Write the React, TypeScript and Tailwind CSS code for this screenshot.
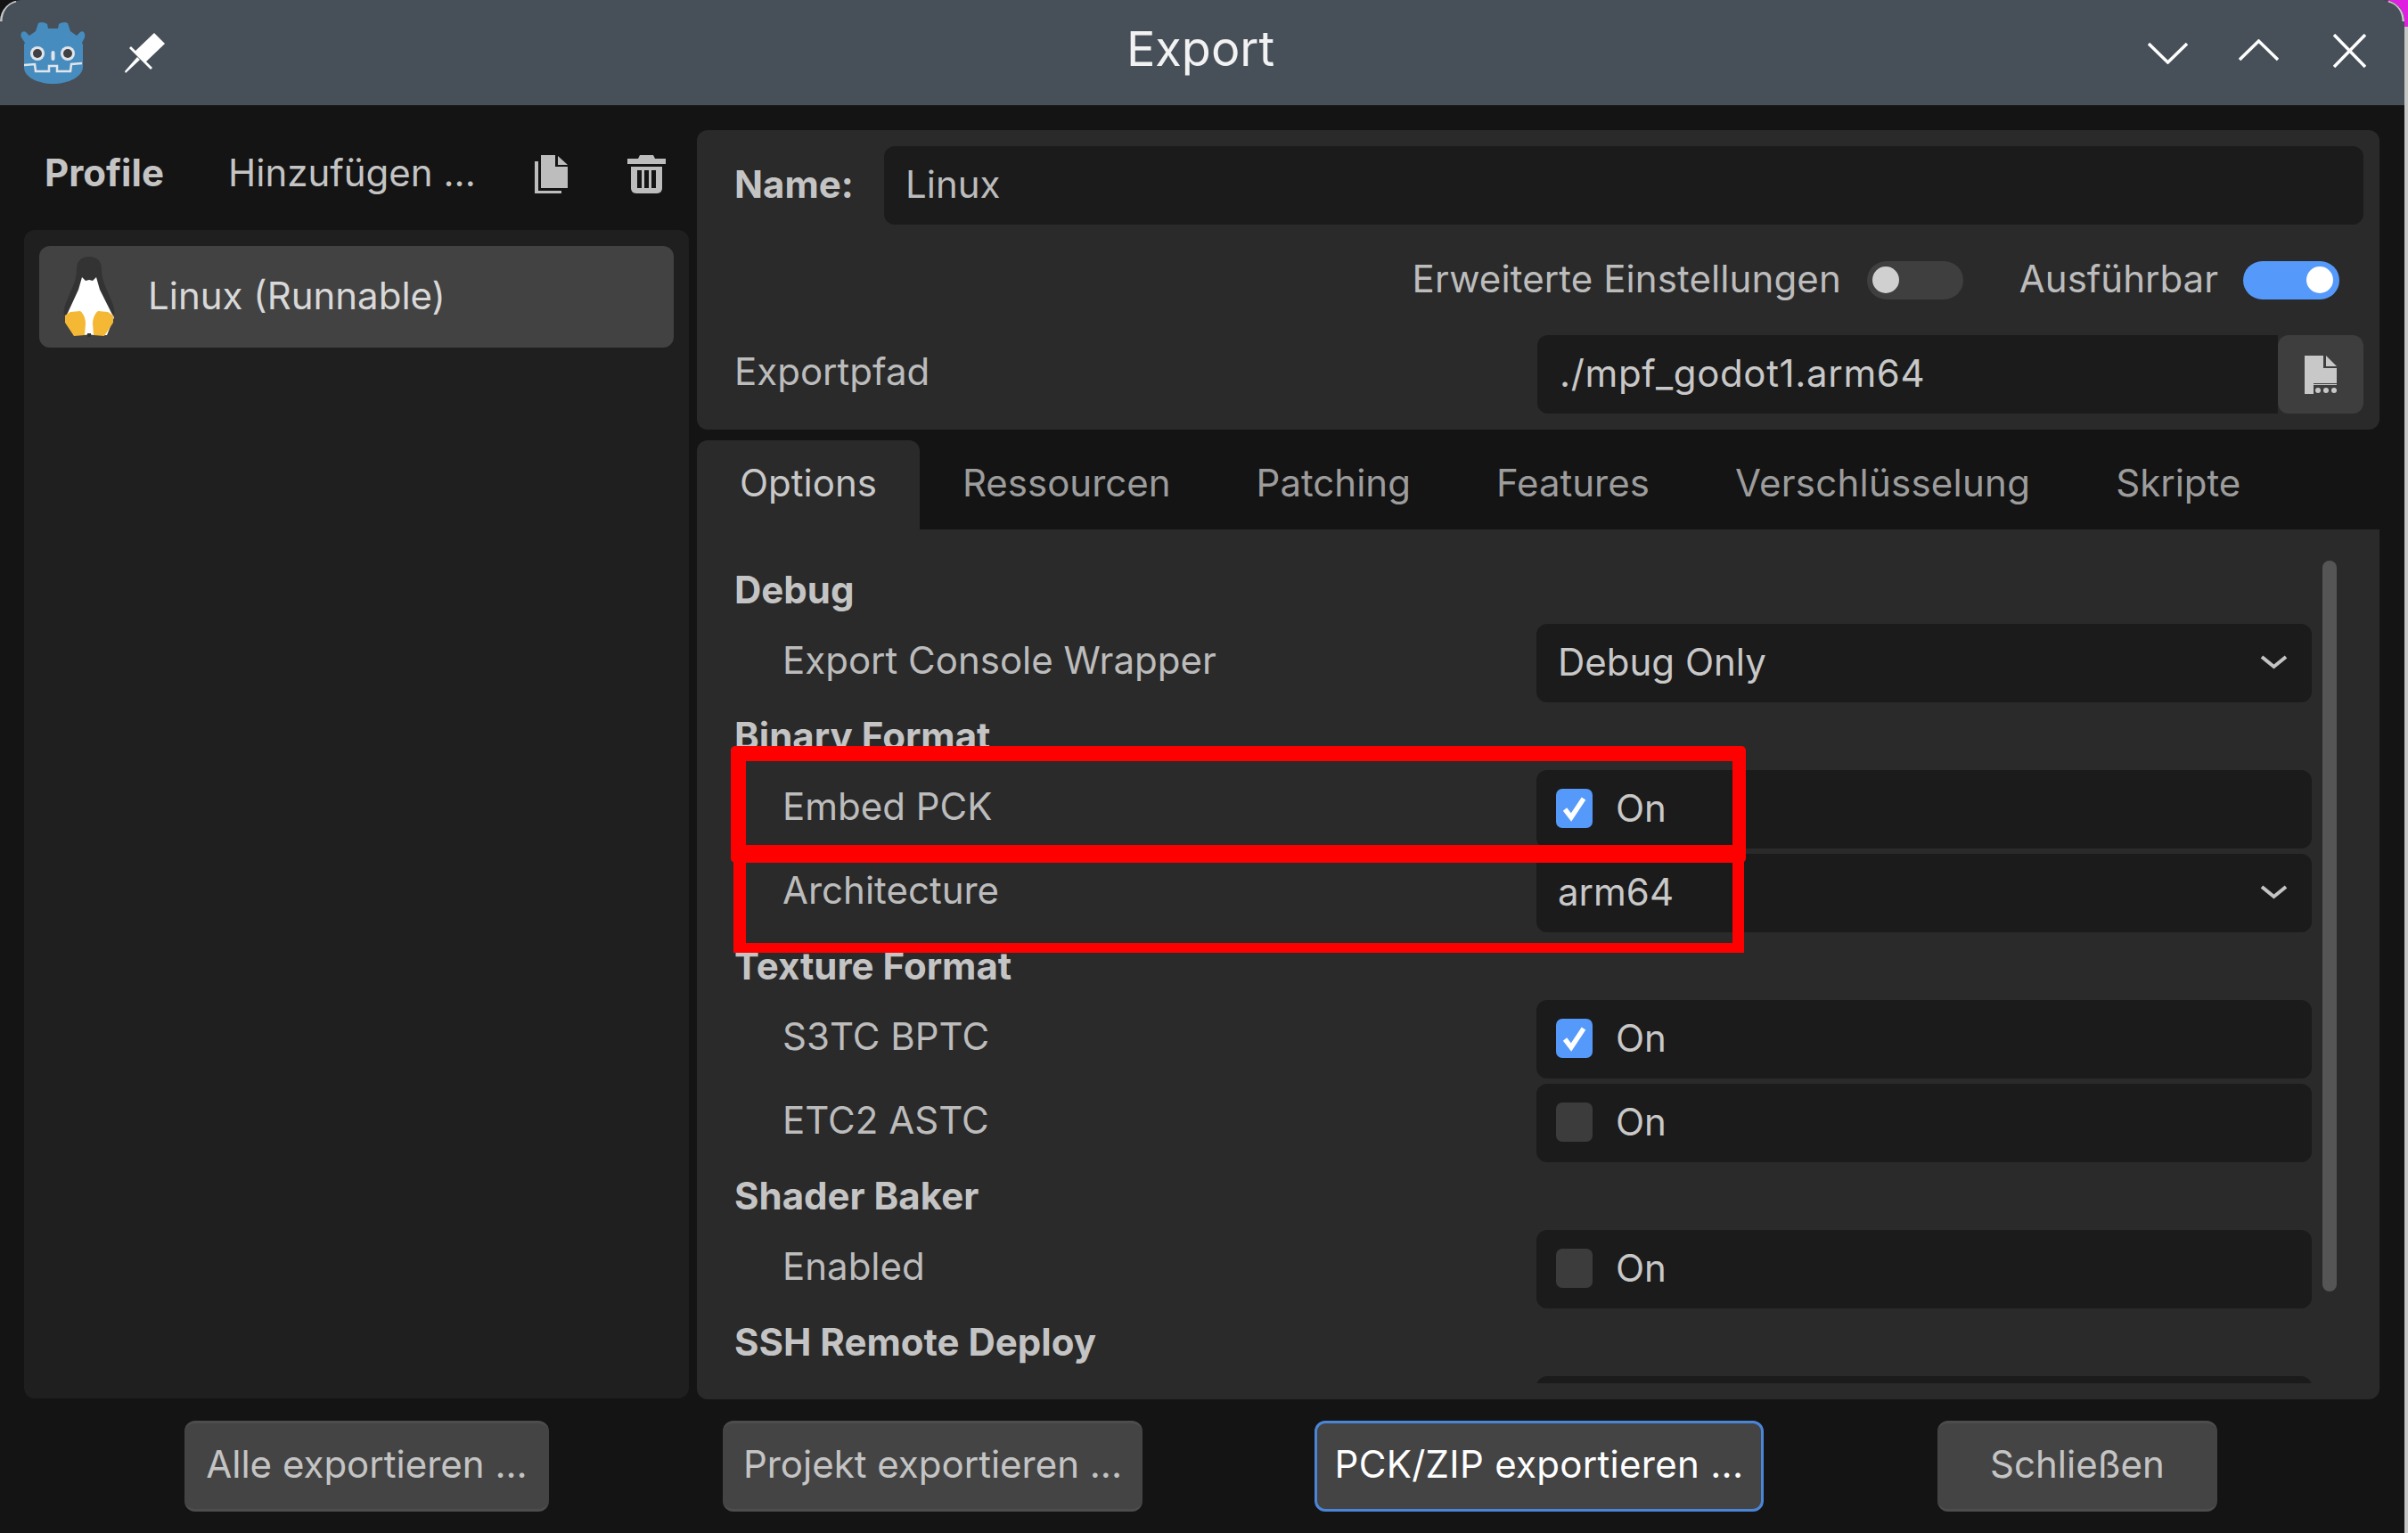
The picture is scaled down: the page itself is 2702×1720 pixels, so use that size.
import React from "react";

const FONT = "font-['Inter','Liberation_Sans',sans-serif]";

function GodotIcon() {
  return (
    <svg viewBox="0 0 73 70" className="w-[73px] h-[70px] shrink-0">
      <path
        d="M20 2c3-2 7-1 10 1l1 5h11l1-5c3-2 7-3 10-1l3 9 7 5 4-4c3-2 6 0 5 6l-3 6 1 2v25c0 11-16 19-33.500 19S4 62 4 52V26l1-2-4-6c-2-5 2-8 5-6l4 4 7-5z"
        fill="#478cbf"
      />
      <circle cx="19" cy="36" r="8" fill="#dfe5ea" />
      <circle cx="53" cy="36" r="8" fill="#dfe5ea" />
      <circle cx="19" cy="36" r="5" fill="#414042" />
      <circle cx="53" cy="36" r="5" fill="#414042" />
      <rect x="34.500" y="33" width="4" height="11" rx="2" fill="#dfe5ea" />
      <path d="M4 49l12-1 1 8h15v-6h9v6h15l1-8 12-1" fill="none" stroke="#dfe5ea" strokeWidth="2.500" />
    </svg>
  );
}

function PinIcon() {
  return (
    <svg viewBox="0 0 45 45" className="w-[45px] h-[45px] shrink-0" fill="#ffffff">
      <path d="M33 0l12 12-22 21-12-12z" />
      <path d="M5 17l2-2 24 24-2 2z" />
      <path d="M1 45l-1-2 14-16 3 3z" />
    </svg>
  );
}

function DuplicateIcon() {
  return (
    <svg viewBox="0 0 37 43" className="w-[37px] h-[43px] shrink-0" fill="#bdbdbd">
      <path d="M7 0h16v13h14v24H7z" />
      <path d="M26 1l11 10H26z" />
      <path d="M0 7h4v33h26v3H0z" />
    </svg>
  );
}

function TrashIcon() {
  return (
    <svg viewBox="0 0 43 43" className="w-[43px] h-[43px] shrink-0" fill="#bdbdbd">
      <path d="M14 0h15l2 4h12v6H0V4h12z" />
      <path fillRule="evenodd" d="M4 13h35v24c0 3-2 6-6 6H10c-4 0-6-3-6-6zM11 17v20h5V17zM19 17v20h5V17zM27 17v20h5V17z" />
    </svg>
  );
}

function TuxIcon() {
  return (
    <svg viewBox="0 0 58 92" className="w-[58px] h-[92px] shrink-0">
      <path d="M29 1c9 0 14 5 14 14 0 13 5 20 10 33 4 9 5 14 4 18H1c-1-4 0-9 4-18 5-13 10-20 10-33C15 6 20 1 29 1z" fill="#333333" />
      <path d="M21 24l4 4 4-1 4 1 4-4 4 14 13 26 3 5-8 20H34l-5-1-5 1H12L2 69l3-5 12-26z" fill="#ffffff" />
      <path d="M2 67l6-4 11-1c4 3 6 9 6 14l-1 13-12 1-10-15z" fill="#f4b835" />
      <path d="M56 67l-6-4-11-1c-4 3-6 9-6 14l1 13 12 1 10-15z" fill="#f4b835" />
      <rect x="27" y="87" width="4" height="4" fill="#333333" />
    </svg>
  );
}

function SaveFileIcon() {
  return (
    <svg viewBox="0 0 36 44" className="w-[36px] h-[44px]" fill="#c8c8c8">
      <path d="M0 1h21v14h15v17H10v12H0z" />
      <path d="M24 1l12 12H24z" />
      <circle cx="15" cy="40" r="3" />
      <circle cx="24" cy="40" r="3" />
      <circle cx="33" cy="40" r="3" />
      <rect x="10" y="33" width="26" height="1" />
    </svg>
  );
}

function Chevron() {
  return (
    <svg viewBox="0 0 31 17" className="w-[31px] h-[17px]" fill="none" stroke="#c4c4c4" strokeWidth="4">
      <path d="M2 3l13.500 11L29 3" />
    </svg>
  );
}

function Toggle({ on }: { on: boolean }) {
  return (
    <div
      className={
        on
          ? "w-[108px] h-[43px] rounded-full bg-[#5599fa] flex items-center justify-end pr-[7px]"
          : "w-[108px] h-[43px] rounded-full bg-[#3f3f3f] flex items-center justify-start pl-[6px]"
      }
    >
      <div className={on ? "w-[30px] h-[30px] rounded-full bg-white" : "w-[30px] h-[30px] rounded-full bg-[#d0d0d0]"} />
    </div>
  );
}

function Check({ on }: { on: boolean }) {
  return (
    <div className={on ? "w-[41px] h-[44px] rounded-[7px] bg-[#5599fa] flex items-center justify-center" : "w-[41px] h-[44px] rounded-[7px] bg-[#3c3c3c]"}>
      {on && (
        <svg viewBox="0 0 32 32" className="w-[32px] h-[32px]" fill="none" stroke="#ffffff" strokeWidth="5.500">
          <path d="M5 17l7 9L26 5" />
        </svg>
      )}
    </div>
  );
}

function SectionLabel({ children }: { children: React.ReactNode }) {
  return <div className="h-[64px] flex items-center pl-[42px] font-bold text-[42px] leading-none text-[#c4c4c4]">{children}</div>;
}

function Row({ label, children }: { label: string; children: React.ReactNode }) {
  return (
    <div className="flex h-[88px] my-[6px] items-stretch">
      <div className="w-[942px] pl-[96px] pr-[8px] flex items-center text-[42px] leading-none text-[#bcbcbc] pb-[7px]">{label}</div>
      <div className="w-[870px] rounded-[12px] bg-[#1b1b1b] flex items-center pb-[3px]">{children}</div>
    </div>
  );
}

function CheckValue({ on }: { on: boolean }) {
  return (
    <div className="flex items-center pl-[22px] gap-[26px] text-[42px] leading-none text-[#c8c8c8]">
      <Check on={on} />
      <span>On</span>
    </div>
  );
}

function SelectValue({ value }: { value: string }) {
  return (
    <div className="flex items-center justify-between w-full pl-[24px] pr-[27px] text-[42px] leading-none text-[#c8c8c8]">
      <span>{value}</span>
      <Chevron />
    </div>
  );
}

function Tab({ label, active, wide }: { label: string; active?: boolean; wide?: boolean }) {
  return (
    <div
      className={
        (active
          ? "h-[100px] px-[48px] pb-[4px] flex items-center rounded-t-[12px] bg-[#2a2a2a] text-[42px] leading-none text-[#c8c8c8]"
          : "h-[100px] px-[48px] pb-[4px] flex items-center text-[42px] leading-none text-[#9c9c9c]") +
        (wide ? " tracking-[0.25px]" : "")
      }
    >
      {label}
    </div>
  );
}

function FooterButton({ label, width, focus }: { label: string; width: string; focus?: boolean }) {
  return (
    <div
      className={
        (focus
          ? "border-[3px] border-[#4a86d8] text-[#ffffff] tracking-[0.3px] "
          : "border-y-[3px] border-x-0 border-y-[#4d4d4d] text-[#c4c4c4] ") +
        width +
        " h-[102px] pb-[4px] rounded-[12px] bg-[#444444] flex items-center justify-center text-[42px] leading-none"
      }
    >
      {label}
    </div>
  );
}

export default function App() {
  return (
    <div className={FONT + " relative w-[2702px] h-[1720px] bg-[#c6c6c6] overflow-hidden"}>
      <div className="absolute right-0 top-0 w-[30px] h-[30px] bg-[#e020e0]" />
      <div className="absolute left-0 top-0 w-[30px] h-[30px] bg-[#141414]" />
      <div className="relative w-[2698px] h-[1720px] bg-[#141414] rounded-t-[24px] overflow-hidden flex flex-col">
        {/* title bar */}
        <div className="relative h-[118px] bg-[#475059] flex items-center shrink-0 pl-[23px]">
          <GodotIcon />
          <div className="ml-[44px]"><PinIcon /></div>
          <div className="absolute inset-x-0 top-0 h-[110px] flex items-center justify-center text-[54px] leading-none text-[#f2f2f2] pr-[4px]">Export</div>
          <div className="ml-auto flex items-center pr-[43px]">
            <svg viewBox="0 0 45 25" className="w-[45px] h-[25px] mr-[57px]" fill="none" stroke="#ffffff" strokeWidth="3.500">
              <path d="M1 2l21.500 21L44 2" />
            </svg>
            <svg viewBox="0 0 45 25" className="w-[45px] h-[25px] mr-[61px] -mt-[6px]" fill="none" stroke="#ffffff" strokeWidth="3.500">
              <path d="M1 23L22.500 2 44 23" />
            </svg>
            <svg viewBox="0 0 37 38" className="w-[37px] h-[38px] -mt-[4px]" fill="none" stroke="#ffffff" strokeWidth="3.500">
              <path d="M1 1l35 36M36 1L1 37" />
            </svg>
          </div>
          {/* light rim at the rounded window corners */}
          <svg viewBox="0 0 30 30" className="absolute left-0 top-0 w-[30px] h-[30px]" fill="none" stroke="#c6c6c6" strokeWidth="3">
            <path d="M1 24C1 12 8 3 18 1" />
          </svg>
          <svg viewBox="0 0 30 30" className="absolute right-0 top-0 w-[30px] h-[30px]" fill="none" stroke="#c6c6c6" strokeWidth="3">
            <path d="M29 24C29 12 22 3 12 1" />
          </svg>
        </div>

        {/* body */}
        <div className="flex flex-1 min-h-0">
          {/* sidebar */}
          <div className="w-[782px] shrink-0 flex flex-col pl-[27px] pr-[9px]">
            <div className="h-[140px] flex items-center pt-[12px] pl-[23px] text-[42px] leading-none text-[#c4c4c4]">
              <span className="font-bold w-[206px]">Profile</span>
              <span className="w-[344px]">Hinzufügen ...</span>
              <div className="mt-[2px]"><DuplicateIcon /></div>
              <div className="ml-[67px] mt-[2px]"><TrashIcon /></div>
            </div>
            <div className="h-[1311px] rounded-[12px] bg-[#1f1f1f] pt-[18px] px-[17px]">
              <div className="h-[114px] rounded-[12px] bg-[#424242] flex items-center pl-[27px] text-[42px] leading-none text-[#d8d8d8]">
                <TuxIcon />
                <span className="ml-[37px] -mt-[2px]">Linux (Runnable)</span>
              </div>
            </div>
          </div>

          {/* right column */}
          <div className="w-[1888px] shrink-0 flex flex-col pt-[28px]">
            {/* header card */}
            <div className="h-[336px] rounded-[12px] bg-[#2a2a2a] pt-[18px] px-[18px] text-[42px] leading-none flex flex-col shrink-0">
              <div className="flex h-[88px] items-center">
                <span className="w-[192px] pl-[24px] font-bold text-[#c4c4c4] pb-[2px]">Name:</span>
                <div className="flex-1 h-[88px] rounded-[12px] bg-[#1b1b1b] flex items-center pl-[24px] pb-[2px] text-[#bcbcbc]">Linux</div>
              </div>
              <div className="flex h-[124px] items-center justify-end pr-[27px] text-[#bcbcbc]">
                <span className="pb-[2px] tracking-[0.1px]">Erweiterte Einstellungen</span>
                <div className="ml-[29px]"><Toggle on={false} /></div>
                <span className="ml-[63px] pb-[2px]">Ausführbar</span>
                <div className="ml-[28px]"><Toggle on /></div>
              </div>
              <div className="flex h-[88px] items-center">
                <span className="w-[925px] pl-[24px] pb-[6px] text-[#bcbcbc]">Exportpfad</span>
                <div className="flex-1 h-[88px] rounded-l-[12px] bg-[#1b1b1b] flex items-center pl-[25px] pb-[3px] text-[#c8c8c8] tracking-[0.65px]">./mpf_godot1.arm64</div>
                <div className="w-[96px] h-[88px] rounded-[12px] bg-[#3e3e3e] flex items-center justify-center">
                  <SaveFileIcon />
                </div>
              </div>
            </div>

            {/* tabs */}
            <div className="flex mt-[12px] shrink-0">
              <Tab label="Options" active />
              <Tab label="Ressourcen" />
              <Tab label="Patching" />
              <Tab label="Features" />
              <Tab label="Verschlüsselung" wide />
              <Tab label="Skripte" />
            </div>

            {/* options */}
            <div className="relative h-[976px] rounded-b-[12px] bg-[#2a2a2a] pt-[36px] shrink-0">
              <div className="h-[922px] overflow-hidden">
                <SectionLabel>Debug</SectionLabel>
                <Row label="Export Console Wrapper"><SelectValue value="Debug Only" /></Row>
                <SectionLabel>Binary Format</SectionLabel>
                <Row label="Embed PCK"><CheckValue on /></Row>
                <Row label="Architecture"><SelectValue value="arm64" /></Row>
                <SectionLabel>Texture Format</SectionLabel>
                <Row label="S3TC BPTC"><CheckValue on /></Row>
                <Row label="ETC2 ASTC"><CheckValue on={false} /></Row>
                <SectionLabel>Shader Baker</SectionLabel>
                <Row label="Enabled"><CheckValue on={false} /></Row>
                <SectionLabel>SSH Remote Deploy</SectionLabel>
                <Row label=""><span /></Row>
              </div>
              {/* scrollbar */}
              <div className="absolute left-[1824px] top-[35px] w-[16px] h-[820px] rounded-full bg-[#555555]" />
            </div>
          </div>
        </div>

        {/* footer */}
        <div className="absolute left-0 top-[1594px] w-full flex">
          <div className="ml-[207px]"><FooterButton label="Alle exportieren ..." width="w-[409px]" /></div>
          <div className="ml-[195px]"><FooterButton label="Projekt exportieren ..." width="w-[471px]" /></div>
          <div className="ml-[193px]"><FooterButton label="PCK/ZIP exportieren ..." width="w-[504px]" focus /></div>
          <div className="ml-[195px]"><FooterButton label="Schließen" width="w-[314px]" /></div>
        </div>

        {/* red annotation boxes */}
        <div className="absolute left-[823px] top-[958px] w-[1134px] h-[111px] border-solid border-t-[10px] border-l-[14px] border-r-[13px] border-b-[11px] border-[#ff0000]" />
        <div className="absolute left-[820px] top-[837px] w-[1139px] h-[131px] rounded-[5px] border-solid border-t-[17px] border-l-[17px] border-r-[15px] border-b-[20px] border-[#ff0000]" />
      </div>
    </div>
  );
}
